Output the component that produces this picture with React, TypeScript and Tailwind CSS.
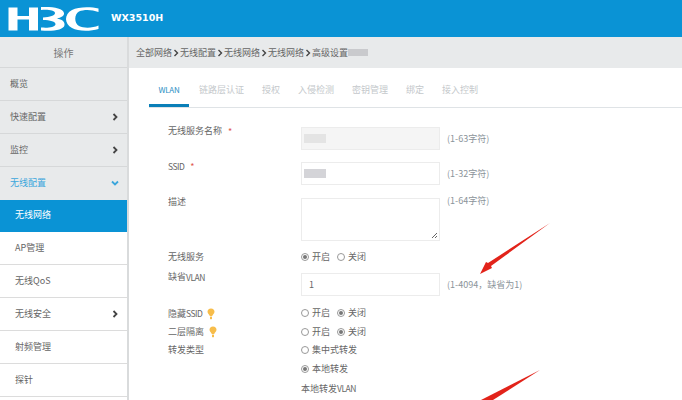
import { ReactNode } from 'react';

const sideItems = [
  { name: '概览' },
  { name: '快速配置', arrow: true },
  { name: '监控', arrow: true },
];

const subItems = [
  { name: 'AP管理' },
  { name: '无线QoS' },
  { name: '无线安全', arrow: true },
  { name: '射频管理' },
  { name: '探针' },
];

const tabs = ['链路层认证', '授权', '入侵检测', '密钥管理', '绑定', '接入控制'];

const Chevron = ({ down = false, color = '#444' }: { down?: boolean; color?: string }) => (
  <svg width="8" height="8" viewBox="0 0 8 8" className={down ? 'rotate-90' : ''}>
    <path d="M2.5 1 L5.5 4 L2.5 7" fill="none" stroke={color} strokeWidth="1.8" />
  </svg>
);

const Sep = () => (
  <span className="w-[8px] flex justify-center">
    <svg width="6" height="8" viewBox="0 0 6 8">
      <path d="M1.5 1 L4.5 4 L1.5 7" fill="none" stroke="#444" strokeWidth="1.4" />
    </svg>
  </span>
);

const Bulb = () => (
  <svg width="8" height="12" viewBox="0 0 8 12">
    <path d="M4 0.5 C6.2 0.5 7.5 2 7.5 3.8 C7.5 5.6 5.6 6.6 5.2 8 L2.8 8 C2.4 6.6 0.5 5.6 0.5 3.8 C0.5 2 1.8 0.5 4 0.5 Z" fill="#f7bd4b" />
    <rect x="3" y="8.6" width="2" height="2.6" fill="#f7bd4b" />
  </svg>
);

const Radio = ({ on = false, label }: { on?: boolean; label: string }) => (
  <span className="flex items-center gap-[3px]">
    <span className="w-[8px] h-[8px] rounded-full border border-[#999] flex items-center justify-center bg-white">
      {on && <span className="w-[4px] h-[4px] rounded-full bg-[#777]" />}
    </span>
    {label}
  </span>
);

const Row = ({
  label,
  className,
  children,
  hint,
  labelUp = false,
  hintUp = false,
}: {
  label: ReactNode;
  className: string;
  children: ReactNode;
  hint?: string;
  labelUp?: boolean;
  hintUp?: boolean;
}) => (
  <div className={`flex text-[9px] leading-[14px] text-[#666] ${className}`}>
    <div className={`w-[133px] shrink-0 flex items-start ${labelUp ? '-mt-[3px]' : ''}`}>{label}</div>
    <div className="w-[139px] shrink-0">{children}</div>
    {hint && (
      <div className={`ml-[7px] text-[#8b949a] whitespace-nowrap ${hintUp ? '-mt-[4px]' : 'self-center'}`}>{hint}</div>
    )}
  </div>
);

const Star = () => <span className="ml-[6px] mt-[1px] text-[#e0584f] text-[9px]">*</span>;

const Latin = ({ children }: { children: ReactNode }) => (
  <span className="text-[8.5px] tracking-[-0.5px]">{children}</span>
);

const Field = ({ children, className = '' }: { children?: ReactNode; className?: string }) => (
  <div className={`h-full border border-[#ececec] flex items-center pl-[7px] ${className}`}>{children}</div>
);

const Masked = ({ dark = false }: { dark?: boolean }) => (
  <span className={`-ml-[5px] w-[22px] h-[9px] ${dark ? 'bg-[#d4d4d8]' : 'bg-[#e4e4e4]'}`} />
);

export default function App() {
  return (
    <div className="relative w-[682px] h-[400px] overflow-hidden bg-white flex flex-col [font-family:'Noto_Sans_CJK_SC','Liberation_Sans',sans-serif]">
      {/* header */}
      <div className="h-[37px] shrink-0 bg-[#0a93d5] flex items-center pl-[8px]">
        <svg width="92" height="26" viewBox="0 0 92 26" fill="white">
          <path d="M0.5 1.5 H9.5 V10 H21 V1.5 H30 V24.5 H21 V13.5 H9.5 V24.5 H0.5 Z" />
          <path d="M33 1 C45 0.5 55 2 56 7 C56.5 10 53 11.5 49 12.5 C54 13.5 57 15.5 56.5 19 C56 24 45 25.5 33 24.5 L33 21.5 C40 22 46.5 21.5 47.5 18.5 C48 15.5 42 14 35 14 L35 11.5 C42 11 47 9.5 47 7 C46.5 4 40 3.5 33 4 Z" />
          <path d="M90.5 2.5 V6 C84 3.5 76 3.2 71 5.5 C66 8 66 17.5 71 20 C76 22.5 85 22 90.5 19.5 V23 C82 25.5 70 25.5 64 22 C56 18 56 8 64 4 C70 0.5 83 0.5 90.5 2.5 Z" />
        </svg>
        <span className="ml-[11px] text-white text-[9.5px] font-bold font-['DejaVu_Sans']">WX3510H</span>
      </div>

      <div className="flex flex-1 min-h-0">
        {/* sidebar */}
        <div className="w-[129px] shrink-0 bg-[#e8eaeb] border-r-[2px] border-[#d9dbdc] flex flex-col text-[9px] text-[#666]">
          <div className="h-[31px] shrink-0 border-b border-[#d6d8d9] flex items-center justify-center text-[10px] text-[#777]">
            操作
          </div>
          {sideItems.map((item) => (
            <div key={item.name} className="h-[33px] shrink-0 border-b border-[#d6d8d9] flex items-center justify-between pl-[10px] pr-[8px] pb-[1px]">
              {item.name}
              {item.arrow && <Chevron />}
            </div>
          ))}
          <div className="h-[33px] shrink-0 flex items-center justify-between pl-[10px] pr-[8px] pb-[1px] text-[#3ba6dc]">
            无线配置
            <Chevron down color="#3ba6dc" />
          </div>
          <div className="h-[32px] shrink-0 bg-[#0a93d5] text-white flex items-center pl-[15px] pb-[2px]">无线网络</div>
          <div className="bg-white flex-1">
            {subItems.map((item) => (
              <div key={item.name} className="h-[33px] border-b border-[#dcdcdc] flex items-center justify-between pl-[15px] pr-[8px] pb-[1px]">
                {item.name}
                {item.arrow && <Chevron />}
              </div>
            ))}
          </div>
        </div>

        {/* main */}
        <div className="flex-1 min-w-0 flex flex-col">
          <div className="h-[31px] shrink-0 bg-[#e8eaeb] flex items-center pl-[7px] text-[9px] text-[#666] whitespace-nowrap">
            全部网络<Sep />无线配置<Sep />无线网络<Sep />无线网络<Sep />高级设置
            <span className="w-[20px] h-[7px] bg-[#c9cacd]" />
          </div>

          <div className="h-[40px] shrink-0 ml-[20px] border-b border-[#dfe3e6] flex items-center text-[9px] text-[#c4c8cb]">
            <div className="w-[40px] h-full relative flex items-center justify-center pt-[5px] text-[8px] tracking-[-0.3px] text-[#2e8fc4]">
              WLAN
              <span className="absolute left-0 right-0 bottom-0 h-[3px] bg-[#0a7fb8]" />
            </div>
            <div className="flex gap-[18px] ml-[10px] pt-[5px]">
              {tabs.map((t) => (
                <span key={t}>{t}</span>
              ))}
            </div>
          </div>

          <div className="pl-[39px] pt-[19px]">
            <Row label={<>无线服务名称<Star /></>} labelUp className="h-[23px]" hint="(1-63字符)">
              <Field className="bg-[#f5f5f5]"><Masked /></Field>
            </Row>
            <Row label={<><Latin>SSID</Latin><Star /></>} labelUp className="h-[23px] mt-[12px]" hint="(1-32字符)">
              <Field><Masked dark /></Field>
            </Row>
            <Row label="描述" labelUp hintUp className="h-[43px] mt-[13px]" hint="(1-64字符)">
              <div className="relative h-full border border-[#ececec]">
                <svg className="absolute right-[1px] bottom-[1px]" width="7" height="7" viewBox="0 0 7 7">
                  <path d="M1 6 L6 1 M4 6 L6 4" stroke="#666" strokeWidth="1" />
                </svg>
              </div>
            </Row>
            <Row label="无线服务" className="h-[14px] mt-[9px]">
              <div className="flex gap-[7px]"><Radio on label="开启" /><Radio label="关闭" /></div>
            </Row>
            <Row label={<>缺省<Latin>VLAN</Latin></>} labelUp className="h-[23px] mt-[9px]" hint="(1-4094，缺省为1)">
              <Field>1</Field>
            </Row>
            <Row label={<span className="flex items-center gap-[5px]"><span>隐藏<Latin>SSID</Latin></span><Bulb /></span>} className="h-[14px] mt-[10px]">
              <div className="flex gap-[7px]"><Radio label="开启" /><Radio on label="关闭" /></div>
            </Row>
            <Row label={<span className="flex items-center gap-[5px]">二层隔离<Bulb /></span>} className="h-[14px] mt-[5px]">
              <div className="flex gap-[7px]"><Radio label="开启" /><Radio on label="关闭" /></div>
            </Row>
            <Row label="转发类型" className="h-[14px] mt-[4px]">
              <Radio label="集中式转发" />
            </Row>
            <Row label="" className="h-[14px] mt-[5px]">
              <Radio on label="本地转发" />
            </Row>
            <Row label="" className="h-[14px] mt-[5px]">
              本地转发<Latin>VLAN</Latin>
            </Row>
          </div>
        </div>
      </div>

      {/* annotation arrows */}
      <svg className="absolute left-0 top-0 pointer-events-none" width="682" height="400">
        <path d="M550 223 L491 266 L492 268 L480 274 L486 262 L488 263 Z" fill="#e2231a" />
        <path d="M540 370 L481 400 L493 400 Z" fill="#e2231a" />
      </svg>
    </div>
  );
}
